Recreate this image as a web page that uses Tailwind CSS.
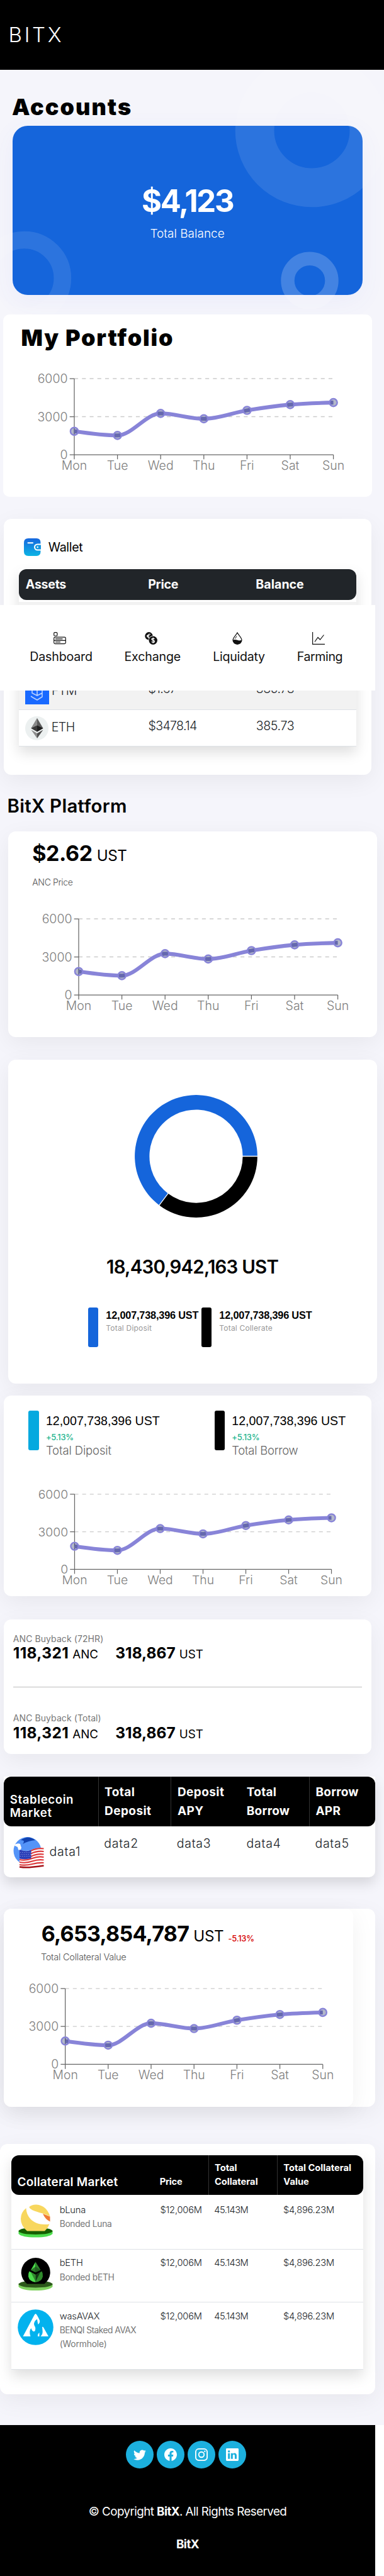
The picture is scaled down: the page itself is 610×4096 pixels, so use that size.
<!DOCTYPE html>
<html lang="en">
<head>
<meta charset="utf-8">
<title>BitX</title>
<script src="https://cdn.jsdelivr.net/npm/@tailwindcss/browser@4"></script>
</head>
<body class="bg-white">
<!-- Line chart shared by every card -->
<svg class="hidden">
  <symbol id="chart" viewBox="-60 -12 500 163" preserveAspectRatio="none">
    <g stroke="#ccc" stroke-width="1.3" stroke-dasharray="6.12 6.12"><path d="M0 0H411.6M0 60.5H411.6"/></g>
    <g stroke="#666" stroke-width="1.25" fill="none"><path d="M0 0V121M0 121H411.6M-7.3 0H0M-7.3 60.5H0M-7.3 121H0M0 121v7.3M68.6 121v7.3M137.2 121v7.3M205.8 121v7.3M274.4 121v7.3M343 121v7.3M411.6 121v7.3"/></g>
    <path fill="none" stroke="#8884d8" stroke-width="6.1" d="M0 83.8C22.9 87.1 45.7 90.4 68.6 90.4C91.5 90.4 114.3 55.4 137.2 55.4C160.1 55.4 182.9 63.9 205.8 63.9C228.7 63.9 251.5 54.25 274.4 50.5C297.3 46.75 320.1 43.5 343 41.4C365.9 39.3 388.7 38.7 411.6 38.1"/>
    <g fill="#263464" fill-opacity=".35" stroke="#8884d8" stroke-width="2.45">
      <circle cx="0" cy="83.8" r="6.1"/><circle cx="68.6" cy="90.4" r="6.1"/><circle cx="137.2" cy="55.4" r="6.1"/><circle cx="205.8" cy="63.9" r="6.1"/><circle cx="274.4" cy="50.5" r="6.1"/><circle cx="343" cy="41.4" r="6.1"/><circle cx="411.6" cy="38.1" r="6.1"/>
    </g>
    <g fill="#808080" font-family="Inter, sans-serif" font-size="19.5" font-weight="300" text-anchor="end">
      <text x="-10.5" y="7">6000</text><text x="-10.5" y="67.5">3000</text><text x="-10.5" y="128">0</text>
    </g>
    <g fill="#808080" font-family="Inter, sans-serif" font-size="19.5" font-weight="300" text-anchor="middle">
      <text x="0" y="144.6">Mon</text><text x="68.6" y="144.6">Tue</text><text x="137.2" y="144.6">Wed</text><text x="205.8" y="144.6">Thu</text><text x="274.4" y="144.6">Fri</text><text x="343" y="144.6">Sat</text><text x="411.6" y="144.6">Sun</text>
    </g>
  </symbol>
</svg>

<div class="relative flex h-[4096px] w-[610px] flex-col overflow-hidden bg-[#f5f5fb] font-[Inter,sans-serif] text-black">

  <header class="relative z-10 h-[111px] shrink-0 bg-black pt-[37.5px] pl-[13.5px]">
    <div class="text-[33px] leading-[35px] font-light tracking-[0.112em] text-white">BITX</div>
  </header>

  <h1 class="mt-[40.5px] ml-[19px] h-9 shrink-0 text-[36px] leading-9 font-black tracking-[0.056em]">Accounts</h1>

  <section class="relative mt-[12.5px] ml-[19.5px] h-[269.3px] w-[556.2px] shrink-0 rounded-[24px] bg-[#1565db] shadow-[0_10px_40px_rgba(80,100,240,0.06)]">
    <svg class="absolute inset-0 h-full w-full overflow-visible" fill="none" stroke="#fff">
      <circle cx="475.5" cy="7.5" r="90.9" stroke-width="61.8" stroke-opacity=".1"/>
      <circle cx="18.5" cy="242.3" r="60.8" stroke-width="27.7" stroke-opacity=".1"/>
      <circle cx="472" cy="246.2" r="35" stroke-width="21.4" stroke-opacity=".2"/>
    </svg>
    <div class="relative flex flex-col items-center pt-[95px] text-white">
      <div class="text-[49px] leading-[50px] font-bold tracking-[-0.047em]">$4,123</div>
      <div class="mt-[16.7px] text-[19px] leading-5 font-light">Total Balance</div>
    </div>
  </section>

  <section class="relative mt-[30.8px] ml-[5px] h-[290px] w-[585.9px] shrink-0 rounded-[10px] bg-white">
    <h2 class="pt-[19.4px] pl-[28.5px] text-[36px] leading-9 font-black tracking-[0.05em]">My Portfolio</h2>
    <svg class="mt-[34.2px] ml-[52.9px] h-[163px] w-[500px]"><use href="#chart"/></svg>
  </section>

  <section class="relative mt-[35.4px] ml-[6.2px] h-[406.1px] w-[583.5px] shrink-0 rounded-[12px] bg-white pt-[30.9px] shadow-[0_10px_37px_rgba(0,0,0,0.06)]">
    <div class="flex h-7 items-center gap-[12px] pl-[31.5px]">
      <svg width="27" height="28" viewBox="0 0 27 28">
        <defs><linearGradient id="wal" x1="0" y1="0" x2="0" y2="1"><stop offset="0" stop-color="#1767de"/><stop offset="1" stop-color="#0cb4e4"/></linearGradient></defs>
        <path fill="url(#wal)" d="M7 0H20Q26.500 0 26.500 7V8.500H21.500A5.500 5.500 0 0 0 21.500 19.500H26.500V21Q26.500 28 20 28H7Q0 28 0 21V7Q0 0 7 0Z"/>
        <path fill="#1495e0" d="M21.500 10.500H27V17.500H21.500A3.500 3.500 0 0 1 21.500 10.500Z"/><circle cx="21.700" cy="14" r="1.200" fill="#fff"/>
        <path stroke="#fff" stroke-width="2" stroke-linecap="round" d="M6.500 7.200H14"/>
      </svg>
      <span class="text-[19.6px] leading-6 tracking-[-0.017em]">Wallet</span>
    </div>
    <div class="mt-[20.2px] ml-[24.1px] w-[535.3px] bg-white text-[19.6px] leading-6 text-[#212529] shadow-[0_10px_20px_rgba(0,0,0,0.13)]">
      <div class="flex h-[49.6px] items-center rounded-[12px] bg-[#212529] pl-[10.5px] font-bold text-white">
        <span class="w-[194.4px] tracking-[-0.015em]">Assets</span><span class="w-[171.2px] tracking-[-0.015em]">Price</span><span>Balance</span>
      </div>
      <div class="mt-[3px] h-[57.2px] border-b border-[#dee2e6] bg-[#f2f2f2]"></div>
      <div class="h-[57.2px] border-b border-[#dee2e6]"></div>
      <div class="flex h-[57.7px] border-b border-[#dee2e6] bg-[#f2f2f2] pt-[10px] pl-[9.4px] font-light">
        <svg width="38" height="38" viewBox="0 0 38 38"><path fill="#1969ff" d="M0 0h38v38H0z"/><g fill="none" stroke="#b8d0ff" stroke-width="1.600"><path d="M11 12l8-5 8 5v14l-8 5-7-4M11 12v8l8 4 8-4M19 24v-9M11 12l8 4 8-4M9 25l3 2"/></g></svg>
        <span class="mt-[4.1px] ml-[4.3px] w-[153.600px] tracking-[-0.03em]">FTM</span><span class="mt-[1.6px] w-[171.2px] tracking-[-0.035em]">$1.67</span><span class="mt-[1.6px] tracking-[-0.02em]">385.73</span>
      </div>
      <div class="flex h-[57.9px] border-b border-[#dee2e6] pt-[10px] pl-[9.9px] font-light">
        <svg width="37" height="38" viewBox="0 0 37 38"><ellipse cx="18.500" cy="19" rx="18.500" ry="19" fill="#ecf0f0"/><path fill="#5b5b5b" d="M19 3l9.500 16L19 24.500 9.500 19z"/><path fill="#8a8a8a" d="M19 3v11.500L9.500 19z"/><path fill="#1e1e1e" d="M19 14.500L28.500 19 19 24.500z"/><path fill="#3a3a3a" d="M19 14.500V24.500L9.500 19z"/><path fill="#8a8a8a" d="M9.500 21.500L19 27v8z"/><path fill="#4c4c4c" d="M28.500 21.500L19 27v8z"/></svg>
        <span class="mt-[5px] ml-[4.600px] w-[153.800px] tracking-[-0.03em]">ETH</span><span class="mt-[2.500px] w-[171.2px] tracking-[-0.035em]">$3478.14</span><span class="mt-[2.500px] tracking-[-0.02em]">385.73</span>
      </div>
    </div>
  </section>

  <h2 class="mt-[35.800px] ml-[11.500px] h-[30px] shrink-0 text-[29.4px] leading-[30px] font-semibold tracking-[0.011em]">BitX Platform</h2>

  <section class="mt-[24.4px] ml-[12.8px] h-[327.2px] w-[585.9px] shrink-0 rounded-[12px] bg-white pt-[18.6px] shadow-[0_10px_37px_rgba(0,0,0,0.06)]">
    <div class="h-[34px] pl-[38.500px] text-[34px] leading-[34px] font-bold tracking-[-0.013em]">$2.62<span class="ml-[7px] text-[24.2px] leading-none font-normal">UST</span></div>
    <div class="mt-[18.8px] pl-[38.500px] text-[14px] leading-5 font-light tracking-[-0.026em] text-[#555]">ANC Price</div>
    <svg class="mt-[35.500px] ml-[52.500px] h-[163px] w-[500px]"><use href="#chart"/></svg>
  </section>

  <section class="mt-[36.4px] ml-[12.8px] h-[514.8px] w-[585.9px] shrink-0 rounded-[12px] bg-white pt-[55.500px] shadow-[0_10px_37px_rgba(0,0,0,0.06)]">
    <svg class="ml-[201.200px]" width="195" height="195" viewBox="-97.5 -97.5 195 195">
      <path fill="#1565db" d="M97.400 0A97.400 97.400 0 1 0 -58.500 77.900L-44.500 59.300A74.100 74.100 0 1 1 74.100 0Z"/>
      <path d="M97.400 0A97.400 97.400 0 0 1 -58.500 77.900L-44.500 59.300A74.100 74.100 0 0 0 74.100 0Z"/>
      <path stroke="#fff" stroke-width="1.300" d="M73 0H98M-59.500 79.200L-43.500 57.900"/>
    </svg>
    <div class="mt-[64.3px] pl-[156.200px] text-[29.4px] leading-[30px] font-semibold tracking-[-0.026em]">18,430,942,163 UST</div>
    <div class="mt-[49.3px] flex pl-[127.6px]">
      <div class="h-[62.3px] w-[15.6px] rounded-[3px] bg-[#1565db]"></div>
      <div class="ml-[12.3px] w-[152.200px] pt-1">
        <div class="font-['Liberation_Sans',sans-serif] text-[16.3px] leading-4 font-bold tracking-[-0.011em] whitespace-nowrap">12,007,738,396 UST</div>
        <div class="mt-[5.800px] text-[12px] leading-[14px] tracking-[0.017em] text-[#999]">Total Diposit</div>
      </div>
      <div class="h-[62.3px] w-[15.6px] rounded-[3px] bg-black"></div>
      <div class="ml-[12.3px] pt-1">
        <div class="font-['Liberation_Sans',sans-serif] text-[16.3px] leading-4 font-bold tracking-[-0.011em] whitespace-nowrap">12,007,738,396 UST</div>
        <div class="mt-[5.800px] text-[12px] leading-[14px] tracking-[0.015em] text-[#999]">Total Collerate</div>
      </div>
    </div>
  </section>

  <section class="mt-[18.6px] ml-[6.2px] h-[319.3px] w-[583.5px] shrink-0 rounded-[12px] bg-white pt-[24.4px] shadow-[0_10px_37px_rgba(0,0,0,0.06)]">
    <div class="flex h-[73px] pl-[38.900px]">
      <div class="h-[62.800px] w-[16.800px] rounded-[3px] bg-[#05a9df]"></div>
      <div class="ml-[11px] w-[268.300px] pt-[5.7px]">
        <div class="font-['Liberation_Sans',sans-serif] text-[19.6px] leading-5">12,007,738,396 UST</div>
        <div class="mt-[8.8px] text-[13px] leading-[14px] font-medium tracking-[-0.02em] text-[#1fb58f]">+5.13%</div>
        <div class="mt-[4.4px] text-[18.5px] leading-5 font-light tracking-[-0.007em] text-[#666]">Total Diposit</div>
      </div>
      <div class="h-[62.800px] w-[15.600px] rounded-[3px] bg-black"></div>
      <div class="ml-[11.500px] pt-[5.7px]">
        <div class="font-['Liberation_Sans',sans-serif] text-[19.6px] leading-5">12,007,738,396 UST</div>
        <div class="mt-[8.8px] text-[13px] leading-[14px] font-medium tracking-[-0.02em] text-[#1fb58f]">+5.13%</div>
        <div class="mt-[4.4px] text-[18.5px] leading-5 font-light tracking-[-0.015em] text-[#666]">Total Borrow</div>
      </div>
    </div>
    <svg class="mt-[48.3px] ml-[52.900px] h-[161px] w-[495.700px]"><use href="#chart"/></svg>
  </section>

  <section class="mt-[37.4px] ml-[6.2px] h-[213.100px] w-[583.5px] shrink-0 rounded-[12px] bg-white px-[14.600px] pt-[22.7px] shadow-[0_10px_37px_rgba(0,0,0,0.06)]">
    <div class="text-[14px] leading-4 tracking-[0.006em] text-[#777]">ANC Buyback (72HR)</div>
    <div class="mt-px flex h-[26px] text-[24.500px] leading-[26px] font-bold">
      <div class="w-[162.500px] tracking-[0.014em]">118,321<span class="ml-[6px] text-[18.800px] leading-none font-normal tracking-normal">ANC</span></div>
      <div>318,867<span class="ml-[6px] text-[18.800px] leading-none font-normal">UST</span></div>
    </div>
    <div class="mt-[40.500px] h-[1.300px] bg-[#bdbdbd]"></div>
    <div class="mt-[41.400px] text-[14px] leading-4 tracking-[0.006em] text-[#777]">ANC Buyback (Total)</div>
    <div class="mt-[2.200px] flex h-[26px] text-[24.500px] leading-[26px] font-bold">
      <div class="w-[162.500px] tracking-[0.014em]">118,321<span class="ml-[6px] text-[18.800px] leading-none font-normal tracking-normal">ANC</span></div>
      <div>318,867<span class="ml-[6px] text-[18.800px] leading-none font-normal">UST</span></div>
    </div>
  </section>

  <section class="mt-[36.9px] ml-[6.2px] h-[159.1px] w-[589.8px] shrink-0 rounded-b-[10px] bg-white shadow-[0_10px_20px_rgba(0,0,0,0.13)]">
    <div class="flex h-[78.6px] rounded-[12px] bg-black text-[19px] leading-[29.3px] font-bold text-white *:pl-[9.500px]">
      <div class="w-[149.4px] pt-[25.1px] text-[18.600px] leading-[21.300px] font-semibold tracking-[0.033em]">Stablecoin<br>Market</div>
      <div class="w-[115.9px] border-l border-[#333] pt-[10px] tracking-[0.022em]">Total<br>Deposit</div>
      <div class="w-[110.8px] border-l border-[#333] pt-[10px] tracking-[0.022em]">Deposit<br>APY</div>
      <div class="w-[108.7px] pt-[10px] tracking-[0.014em]">Total<br>Borrow</div>
      <div class="border-l border-[#333] pt-[10px] tracking-[0.012em]">Borrow<br>APR</div>
    </div>
    <div class="flex pt-[16.500px] text-[19.600px] leading-5 font-light tracking-[0.036em] text-[#212529]">
      <div class="flex w-[159px] pl-[14.800px]">
        <svg width="49" height="50" viewBox="0 0 49 50">
          <circle cx="22.500" cy="22" r="22" fill="#5494f8"/><path fill="#1143b0" d="M12 5Q24-4 35 5Q24 6 15 11Q20 5 12 5Z"/><path fill="#fff" d="M1 13Q6 9 11 11L13 17 11 22 8 20 7 16Z"/>
          <path fill="#fff" d="M10 20Q20 24 30 20T48.500 17.500V46Q40 49 30 48T10 48Z"/>
          <g fill="none" stroke="#dd3a3c" stroke-width="2.200"><path d="M28 22Q38 17 48.500 18.500M28 26.500Q38 21.500 48.500 23M28 31Q38 26 48.500 27.500M10 36Q20 38 30 34T48.500 32M10 40Q20 42 30 38.500T48.500 36.500M10 44Q20 45.500 30 43T48.500 41"/></g>
          <path fill="none" stroke="#a51218" stroke-width="2.500" d="M10 47.500Q20 49 30 47.800T48.500 45.500"/>
          <path fill="#2c3fb8" d="M10 20Q20 24 28.500 20.500V34Q20 36 10 34.500Z"/>
          <g stroke="#93a0e0" stroke-width="1" stroke-dasharray="1 2"><path d="M11 24.500H28M12 27.500H28M11 30.500H28"/></g>
        </svg>
        <span class="mt-[13.300px] ml-[8.500px]">data1</span>
      </div>
      <span class="mt-[0.500px] w-[115.500px]">data2</span><span class="mt-[0.500px] w-[110.800px]">data3</span><span class="mt-[0.500px] w-[108.900px]">data4</span><span class="mt-[0.500px]">data5</span>
    </div>
  </section>

  <section class="mt-[50px] ml-[6.2px] h-[315.8px] w-[589.8px] shrink-0 rounded-[12px] bg-white shadow-[0_10px_37px_rgba(0,0,0,0.06)]">
    <div class="h-full w-[555.1px] rounded-[12px] bg-white pt-[23.3px] shadow-[0_10px_37px_rgba(0,0,0,0.06)]">
      <div class="h-[34px] pl-[59.500px] text-[34px] leading-[34px] font-bold tracking-[-0.022em] whitespace-nowrap">6,653,854,787<span class="ml-[7px] text-[24.2px] leading-none font-normal tracking-[-0.013em]">UST</span><span class="ml-[7px] text-[13px] leading-none font-medium tracking-[-0.019em] text-[#d60000]">-5.13%</span></div>
      <div class="mt-[10.6px] pl-[58.700px] text-[14.7px] leading-5 font-light tracking-[-0.022em] text-[#555]">Total Collateral Value</div>
      <svg class="mt-[28.1px] ml-[38.100px] h-[162.300px] w-[497px]"><use href="#chart"/></svg>
    </div>
  </section>

  <section class="mt-[58.9px] h-[398px] w-[596px] shrink-0 rounded-[12px] bg-white pt-[17.7px] pl-[18.3px] shadow-[0_10px_37px_rgba(0,0,0,0.06)]">
    <div class="h-[341.200px] w-[559px] bg-white shadow-[0_10px_20px_rgba(0,0,0,0.13)]">
      <div class="flex h-[63.6px] rounded-[12px] bg-black text-[14.7px] leading-[22px] font-bold text-white *:pl-[9.300px]">
        <div class="w-[226.1px] pt-[32px] text-[19px] font-semibold tracking-[0.009em]">Collateral Market</div>
        <div class="w-[86.3px] pt-[31.5px] tracking-[-0.017em]">Price</div>
        <div class="w-[109.3px] border-l border-[#333] pt-[9.5px]">Total<br>Collateral</div>
        <div class="border-l border-[#333] pt-[9.5px] whitespace-nowrap">Total Collateral<br>Value</div>
      </div>
      <div class="flex h-[86.7px] border-b border-[#dee2e6] pt-[12.1px] pl-[9.700px] text-[14.7px] leading-[22px] font-light tracking-[-0.015em] text-[#212529]">
        <svg class="mt-[2px] mr-[10.700px]" width="56" height="54" viewBox="0 0 56 54">
          <path fill="#4cdd4c" d="M1.500 42H55.500V47Q50 52.500 28.500 52.500T1.500 47Z"/><ellipse cx="28.500" cy="42.500" rx="27" ry="5.500" fill="#155e00"/>
          <path fill="#f8d75e" d="M13.500 6C14 20 25 35 50.500 31.500Q48 38 43 42.500H15Q5 34 5 23Q5 13 13.500 6Z"/><path fill="#f8d75e" d="M18.500 4Q23 0 30 .5Q46 2 51.500 19L40 14.500Q18 9 18.500 4Z"/><path fill="#f07a34" d="M40 15L51.500 19.500V27.500Q44 24 40 15Z"/>
        </svg>
        <div class="w-[159.800px]">bLuna<div class="mt-[0.500px] text-[13.8px] font-normal tracking-[-0.022em] text-[#777]">Bonded Luna</div></div>
        <span class="w-[85.800px]">$12,006M</span><span class="w-[109.700px] tracking-[-0.035em]">45.143M</span><span>$4,896.23M</span>
      </div>
      <div class="flex h-[84.2px] border-b border-[#dee2e6] pt-[10.2px] pl-[9.700px] text-[14.7px] leading-[22px] font-light tracking-[-0.015em] text-[#212529]">
        <svg class="mt-[2px] mr-[10.700px]" width="56" height="54" viewBox="0 0 56 54">
          <path fill="#7ed05f" d="M1.500 42H55.500V47Q50 53 28.500 53T1.500 47Z"/><ellipse cx="28.500" cy="43" rx="27" ry="5.500" fill="#2c581b"/>
          <path d="M15 42.500A23 23 0 1 1 42.500 42.500Z"/>
          <path fill="#4cdd4c" d="M28.500 7.500V24L21 20.500Z"/><path fill="#2f8a2c" d="M28.500 7.500L36.500 20.500 28.500 24Z"/><path fill="#1b4d1a" d="M28.500 15L36.500 20.500 28.500 24.500 21 20.500Z" opacity=".7"/>
          <path fill="#4cdd4c" d="M18.500 22.500L28.500 28V40Q19 39 17 31Q16.500 26 18.500 22.500Z"/><path fill="#2f8a2c" d="M38.500 22.500L28.500 28V40Q38 39 40 31Q40.500 26 38.500 22.500Z"/><path fill="#143a14" d="M28.500 28L36 24 28.500 39Z"/><path fill="#2f8a2c" d="M28.500 28L21 24 28.500 39Z"/>
        </svg>
        <div class="w-[159.800px]">bETH<div class="mt-[0.700px] text-[13.8px] font-normal tracking-[-0.022em] text-[#777]">Bonded bETH</div></div>
        <span class="w-[85.800px]">$12,006M</span><span class="w-[109.700px] tracking-[-0.035em]">45.143M</span><span>$4,896.23M</span>
      </div>
      <div class="flex h-[106.700px] border-b border-[#dee2e6] pt-[10.4px] pl-[9.700px] text-[14.7px] leading-[22px] font-light tracking-[-0.015em] text-[#212529]">
        <svg class="mr-[9.700px]" width="57" height="57" viewBox="0 0 57 57">
          <circle cx="28.500" cy="28.500" r="28.300" fill="#02b2ee"/>
          <path fill="#fff" d="M28.500 7Q30.500 7.500 35 17.500Q36 21 32.500 24Q31.500 20 31 15.500Q24.500 20 26.500 25.500Q29.500 30 27.500 34.500Q23.500 37 21.500 30Q17.500 34 20.500 43H8.500L25.500 11Q27 7.500 28.500 7ZM39 28Q40.500 27 41.500 29.500L49 43H36.500Q40.500 39 39.500 33ZM32 42.500Q31.500 39.500 34.500 37V43H32Z"/>
        </svg>
        <div class="w-[159.800px]">wasAVAX<div class="mt-[0.500px] text-[13.8px] font-normal tracking-[-0.04em] whitespace-nowrap text-[#777]">BENQI Staked AVAX<br><span class="tracking-[-0.01em]">(Wormhole)</span></div></div>
        <span class="w-[85.800px]">$12,006M</span><span class="w-[109.700px] tracking-[-0.035em]">45.143M</span><span>$4,896.23M</span>
      </div>
    </div>
  </section>

  <div class="mt-[48.9px] flex h-[239.8px] shrink-0 bg-white">
    <footer class="flex w-[596px] flex-col bg-black text-center text-[18.8px] leading-6 text-white">
      <div class="mt-[24.5px] flex gap-[4.800px] pl-[200px] *:flex *:size-[44.200px] *:items-center *:justify-center *:rounded-full *:bg-[#1cb0de]">
        <a><svg width="20" height="20" viewBox="0 0 16 16" fill="#fff"><path d="M5.026 15c6.038 0 9.341-5.003 9.341-9.334 0-.14 0-.282-.006-.422A6.685 6.685 0 0 0 16 3.542a6.658 6.658 0 0 1-1.889.518 3.301 3.301 0 0 0 1.447-1.817 6.533 6.533 0 0 1-2.087.793A3.286 3.286 0 0 0 7.875 6.030a9.325 9.325 0 0 1-6.767-3.429 3.289 3.289 0 0 0 1.018 4.382A3.323 3.323 0 0 1 .64 6.575v.045a3.288 3.288 0 0 0 2.632 3.218 3.203 3.203 0 0 1-.865.115 3.230 3.230 0 0 1-.614-.057 3.283 3.283 0 0 0 3.067 2.277A6.588 6.588 0 0 1 .78 13.580a6.320 6.320 0 0 1-.78-.045A9.344 9.344 0 0 0 5.026 15z"/></svg></a>
        <a><svg width="20" height="20" viewBox="0 0 16 16" fill="#fff"><path d="M16 8.049c0-4.446-3.582-8.050-8-8.050C3.580 0-.002 3.603-.002 8.050c0 4.017 2.926 7.347 6.750 7.951v-5.625h-2.030V8.050H6.750V6.275c0-2.017 1.195-3.131 3.022-3.131.876 0 1.791.157 1.791.157v1.980h-1.009c-.993 0-1.303.621-1.303 1.258v1.510h2.218l-.354 2.326H9.250V16c3.824-.604 6.750-3.934 6.750-7.951z"/></svg></a>
        <a><svg width="20" height="20" viewBox="0 0 16 16" fill="none" stroke="#fff" stroke-width="1.450"><rect x=".72" y=".72" width="14.560" height="14.560" rx="4"/><circle cx="8" cy="8" r="3.380"/><circle cx="12.270" cy="3.730" r=".96" fill="#fff" stroke="none"/></svg></a>
        <a><svg width="20" height="20" viewBox="0 0 16 16" fill="#fff"><path d="M0 1.146C0 .513.526 0 1.175 0h13.650C15.474 0 16 .513 16 1.146v13.708c0 .633-.526 1.146-1.175 1.146H1.175C.526 16 0 15.487 0 14.854V1.146zm4.943 12.248V6.169H2.542v7.225h2.401zm-1.200-8.212c.837 0 1.358-.554 1.358-1.248-.015-.709-.520-1.248-1.342-1.248-.822 0-1.359.540-1.359 1.248 0 .694.521 1.248 1.327 1.248h.016zm4.908 8.212V9.359c0-.216.016-.432.080-.586.173-.431.568-.878 1.232-.878.869 0 1.216.662 1.216 1.634v3.865h2.401V9.250c0-2.220-1.184-3.252-2.764-3.252-1.274 0-1.845.700-2.165 1.193v.025h-.016a5.540 5.540 0 0 1 .016-.025V6.169h-2.400c.030.678 0 7.225 0 7.225h2.400z"/></svg></a>
      </div>
      <div class="mt-[57.1px] tracking-[-0.03em]">© Copyright <b>BitX</b>. All Rights Reserved</div>
      <div class="mt-[28px] font-bold tracking-[-0.028em]">BitX</div>
    </footer>
  </div>

  <!-- Fixed bottom navigation, lying over the wallet card -->
  <nav class="absolute top-[962.2px] left-0 flex h-[136.3px] w-[596px] gap-[52px] bg-white pt-[42.500px] pl-[48px] text-[19.6px] leading-6 text-[#111]">
    <a class="flex w-[98px] flex-col items-center gap-[7px] tracking-[-0.009em]">
      <svg class="mr-[5px]" width="20" height="20" viewBox="0 0 20 20" fill="none" stroke="#111" stroke-width="1.200"><rect x=".7" y=".7" width="5.200" height="5.300" rx="1.200"/><rect x=".7" y="8.200" width="18.600" height="10.400" rx="1.800"/><path d="M.7 13.300H19.300M3 10.800H14.500M3 15.900H11"/></svg>Dashboard</a>
    <a class="flex w-[88.500px] flex-col items-center gap-[7px] tracking-[-0.008em]">
      <svg class="mr-[5px]" width="20" height="20" viewBox="0 0 20 20"><circle cx="6.500" cy="6.300" r="6.200" fill="#111"/><path fill="none" stroke="#fff" stroke-width="1.200" d="M9 3.500Q5 2.500 4.600 6.300Q4.800 9.800 8 9.300M3 5.500H7.500M3 7.200H7"/><circle cx="13.200" cy="13.200" r="7.400" fill="#fff"/><circle cx="13.200" cy="13.200" r="6.700" fill="#111"/><path fill="none" stroke="#fff" stroke-width="1.300" d="M15.400 11.200Q14.900 10.100 13.200 10.100Q11 10.100 11 11.600Q11 12.900 13.200 13.200Q15.500 13.500 15.500 15Q15.500 16.400 13.200 16.400Q11.300 16.400 10.900 15.100M13.200 8.700V17.800"/></svg>Exchange</a>
    <a class="flex w-[82px] flex-col items-center gap-[7px] tracking-[-0.014em]">
      <svg class="mr-[5px]" width="20" height="20" viewBox="0 0 20 20"><path fill="none" stroke="#111" stroke-width="1.200" d="M10 1C12 5 17 9 17 12.800A7 6.500 0 0 1 3 12.800C3 9 8 5 10 1Z"/><path fill="#111" d="M3 12.500Q6.500 11.500 10 12.800T17 12.500Q17 19.300 10 19.300T3 12.500Z"/><path stroke="#111" stroke-width="1" d="M9 6.500L6.500 10.500"/></svg>Liquidaty</a>
    <a class="flex w-[71px] flex-col items-center gap-[7px] tracking-[-0.021em]">
      <svg class="mr-[5px]" width="20" height="20" viewBox="0 0 20 20" fill="none" stroke="#111" stroke-width="1.200"><path d="M.6 0V19.400H20M4 15.500L9 8.500 12.500 12 18.500 4.500"/></svg>Farming</a>
  </nav>
</div>
</body>
</html>
